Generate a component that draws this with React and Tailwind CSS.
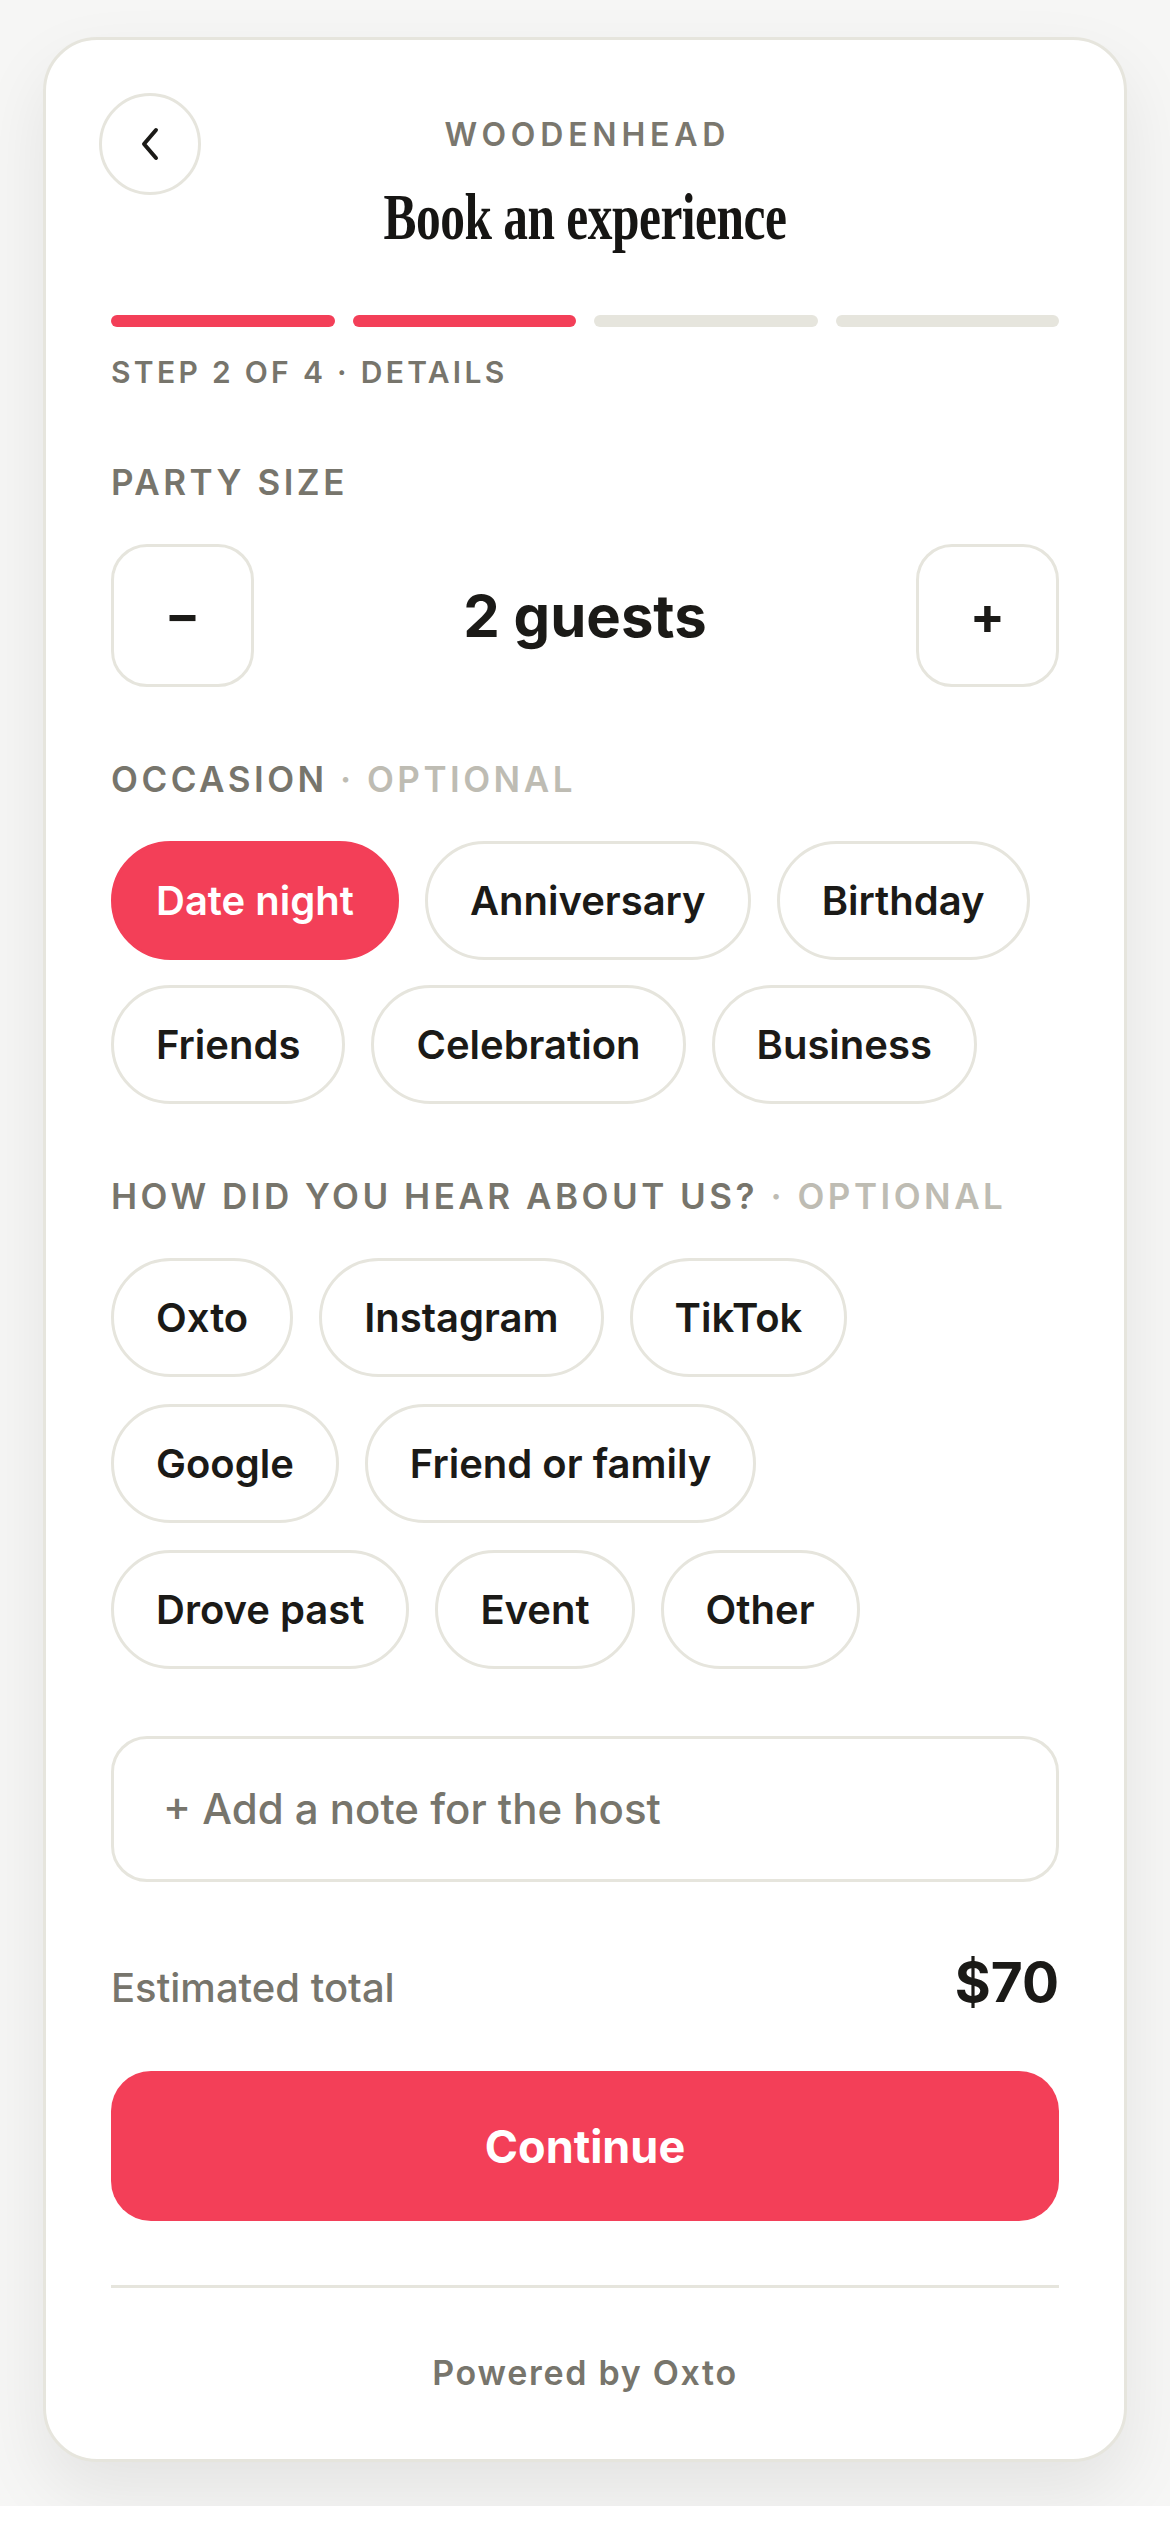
import React from "react";

const RED = "bg-[#f33f58]";

function Chip({ label, active }) {
  return (
    <div
      className={
        "h-[119px] px-[42px] rounded-full flex items-center text-[40px] font-semibold leading-none whitespace-nowrap " +
        (active
          ? "bg-[#f33f58] text-white border-[3px] border-[#f33f58]"
          : "bg-white text-[#1b1a17] border-[3px] border-[#e6e5dd]")
      }
    >
      {label}
    </div>
  );
}

function ChipRows({ rows, active, gapClass }) {
  return (
    <div className={"flex flex-col " + gapClass}>
      {rows.map((row, i) => (
        <div key={i} className="flex gap-[26px]">
          {row.map((l) => (
            <Chip key={l} label={l} active={l === active} />
          ))}
        </div>
      ))}
    </div>
  );
}

function Label({ children, optional }) {
  return (
    <div className="text-[35px] leading-none font-semibold tracking-[0.1em] text-[#77756c] whitespace-nowrap">
      {children}
      {optional && <span className="text-[#bebcb3]"> · OPTIONAL</span>}
    </div>
  );
}

export default function App() {
  return (
    <div
      className="w-[1170px] bg-[#f6f6f5] pt-[37px] pb-[44px] px-[43px]"
      style={{ fontFamily: "Inter, 'Noto Sans', sans-serif" }}
    >
      <div className="relative w-[1084px] bg-white border-[3px] border-[#e6e5dd] rounded-[54px] shadow-[0_30px_70px_rgba(0,0,0,0.08)] px-[65px] pb-[69px]">
        {/* back button */}
        <div className="absolute top-[53px] left-[53px] w-[102px] h-[102px] rounded-full border-[3px] border-[#e6e5dd] flex items-center justify-center">
          <svg width="20" height="34" viewBox="0 0 20 34" fill="none">
            <path
              d="M16 3 L4 17 L16 31"
              stroke="#1b1a17"
              strokeWidth="4"
              strokeLinecap="round"
              strokeLinejoin="round"
            />
          </svg>
        </div>

        {/* header */}
        <div className="flex flex-col items-center pt-[79px]">
          <div className="text-[32px] leading-none font-semibold tracking-[0.15em] text-[#7a776e] pl-[0.15em]">
            WOODENHEAD
          </div>
          <div
            className="mt-[34px] text-[65px] leading-none font-bold text-[#161513] whitespace-nowrap scale-x-[0.76] tracking-[-0.01em]"
            style={{ fontFamily: "'Liberation Serif', 'Times New Roman', serif" }}
          >
            Book an experience
          </div>
        </div>

        {/* progress */}
        <div className="mt-[65px] flex gap-[18px]">
          <div className={"h-[12px] flex-1 rounded-full " + RED}></div>
          <div className={"h-[12px] flex-1 rounded-full " + RED}></div>
          <div className="h-[12px] flex-1 rounded-full bg-[#e6e5dd]"></div>
          <div className="h-[12px] flex-1 rounded-full bg-[#e6e5dd]"></div>
        </div>

        <div className="mt-[30px] text-[30px] leading-none font-semibold tracking-[0.11em] text-[#77756c] whitespace-nowrap">
          STEP 2 OF 4 · DETAILS
        </div>

        {/* party size */}
        <div className="mt-[78px]">
          <Label>PARTY SIZE</Label>
        </div>
        <div className="mt-[44px] flex items-center justify-between">
          <div className="w-[143px] h-[143px] rounded-[36px] border-[3px] border-[#e6e5dd] flex items-center justify-center text-[52px] font-bold leading-none text-[#1b1a17]">
            –
          </div>
          <div className="text-[58px] font-bold leading-none text-[#1b1a17]">2 guests</div>
          <div className="w-[143px] h-[143px] rounded-[36px] border-[3px] border-[#e6e5dd] flex items-center justify-center text-[52px] font-bold leading-none text-[#1b1a17]">
            +
          </div>
        </div>

        {/* occasion */}
        <div className="mt-[75px]">
          <Label optional>OCCASION</Label>
        </div>
        <div className="mt-[44px]">
          <ChipRows
            gapClass="gap-[25px]"
            active="Date night"
            rows={[
              ["Date night", "Anniversary", "Birthday"],
              ["Friends", "Celebration", "Business"],
            ]}
          />
        </div>

        {/* source */}
        <div className="mt-[75px]">
          <Label optional>HOW DID YOU HEAR ABOUT US?</Label>
        </div>
        <div className="mt-[44px]">
          <ChipRows
            gapClass="gap-[27px]"
            rows={[
              ["Oxto", "Instagram", "TikTok"],
              ["Google", "Friend or family"],
              ["Drove past", "Event", "Other"],
            ]}
          />
        </div>

        {/* note */}
        <div className="mt-[67px] h-[146px] rounded-[36px] border-[3px] border-[#e6e5dd] flex items-center pl-[49px] text-[42px] font-medium leading-none text-[#77756c]">
          + Add a note for the host
        </div>

        {/* total */}
        <div className="mt-[73px] flex items-baseline justify-between">
          <div className="text-[40px] font-medium leading-none text-[#77756c]">Estimated total</div>
          <div className="text-[55px] font-bold leading-none text-[#1b1a17]">$70</div>
        </div>

        {/* continue */}
        <div className={"mt-[61px] h-[150px] rounded-[40px] flex items-center justify-center text-[45px] font-bold leading-none text-white " + RED}>
          Continue
        </div>

        <div className="mt-[64px] h-[3px] bg-[#e6e5dd]"></div>

        <div className="mt-[68px] text-center text-[34px] font-semibold leading-none tracking-[0.05em] text-[#77756c]">
          Powered by Oxto
        </div>
      </div>
    </div>
  );
}
